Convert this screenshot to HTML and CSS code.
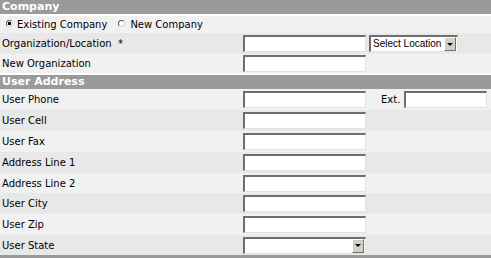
FILE: index.html
```html
<!DOCTYPE html>
<html>
<head>
<meta charset="utf-8">
<title>User Address</title>
<link rel="stylesheet" href="styles.css">
</head>
<body>
<div class="form">
  <div class="head">Company</div>
  <div class="sep"></div>
  <div class="row light h17 radios">
    <span class="radio on"></span><span class="rlabel">Existing Company</span>
    <span class="radio second"></span><span class="rlabel">New Company</span>
  </div>
  <div class="row dark h21">
    <span class="label">Organization/Location&nbsp; *</span>
    <input type="text" class="field">
    <div class="extra">
      <span class="select loc"><span class="val">Select Location</span><span class="btn"><span class="tri"></span></span></span>
    </div>
  </div>
  <div class="row light h19">
    <span class="label">New Organization</span>
    <input type="text" class="field">
  </div>
  <div class="sep"></div>
  <div class="head">User Address</div>
  <div class="row light h21">
    <span class="label">User Phone</span>
    <input type="text" class="field">
    <div class="extra ext">
      <span class="extlabel">Ext.</span>
      <input type="text" class="field small">
    </div>
  </div>
  <div class="row dark h21">
    <span class="label">User Cell</span>
    <input type="text" class="field">
  </div>
  <div class="row light h21">
    <span class="label">User Fax</span>
    <input type="text" class="field">
  </div>
  <div class="row dark h21">
    <span class="label">Address Line 1</span>
    <input type="text" class="field">
  </div>
  <div class="row light h20">
    <span class="label">Address Line 2</span>
    <input type="text" class="field">
  </div>
  <div class="row dark h21">
    <span class="label">User City</span>
    <input type="text" class="field">
  </div>
  <div class="row light h21">
    <span class="label">User Zip</span>
    <input type="text" class="field">
  </div>
  <div class="row dark h20">
    <span class="label">User State</span>
    <span class="select state"><span class="val"></span><span class="btn"><span class="tri"></span></span></span>
  </div>
  <div class="foot"></div>
</div>
</body>
</html>
```

FILE: styles.css
```css
html, body {
  margin: 0;
  padding: 0;
  background: #ffffff;
}

.form {
  width: 491px;
  font-family: "DejaVu Sans", Verdana, sans-serif;
  font-size: 10px;
  color: #000;
}

.head {
  height: 14px;
  line-height: 14px;
  background: #9a9a9a;
  color: #ffffff;
  font-weight: bold;
  font-size: 11px;
  padding-left: 2px;
}

.sep {
  height: 2px;
  background: #ffffff;
}

.foot {
  height: 3px;
  background: #9a9a9a;
}

.row {
  display: grid;
  grid-template-columns: 243px 123px 1fr;
  align-items: center;
}

.light { background: #f1f1f1; }
.dark { background: #e8e8e8; }

.h17 { height: 17px; }
.h19 { height: 19px; }
.h20 { height: 20px; }
.h21 { height: 21px; }

.label {
  padding-left: 2px;
  white-space: nowrap;
}

.field {
  box-sizing: border-box;
  width: 123px;
  height: 17px;
  margin: 0;
  padding: 0 2px;
  border-style: solid;
  border-width: 2px 1px 1px 2px;
  border-color: #6e6e6e #e2e2e2 #e2e2e2 #6e6e6e;
  background: #ffffff;
  font: inherit;
  outline: none;
}

.field.small {
  width: 83px;
}

.extra {
  display: flex;
  align-items: center;
}

.ext .extlabel {
  margin-left: 15px;
  width: 23px;
}

.radios {
  display: flex;
  align-items: center;
  padding-left: 6px;
}

.radio {
  box-sizing: border-box;
  width: 7px;
  height: 7px;
  border-radius: 50%;
  border: 1px solid;
  border-color: #5a5a5a #d0d0d0 #d0d0d0 #5a5a5a;
  background: #ffffff;
  margin-bottom: 2px;
  margin-right: 4px;
}

.radio.on {
  background: radial-gradient(circle, #000 0 1.4px, #fff 1.6px);
}

.radio.second {
  margin-left: 11px;
  margin-right: 5px;
}

.select {
  box-sizing: border-box;
  display: flex;
  align-items: stretch;
  height: 17px;
  border-style: solid;
  border-width: 2px 1px 1px 2px;
  border-color: #6e6e6e #e2e2e2 #e2e2e2 #6e6e6e;
  background: #ffffff;
}

.select .val {
  flex: 1;
  font-family: "Liberation Sans", Arial, sans-serif;
  font-size: 10px;
  line-height: 14px;
  padding-left: 2px;
  white-space: nowrap;
  overflow: hidden;
}

.select.loc {
  width: 89px;
  margin-left: 3px;
}

.select.state {
  width: 123px;
}

.btn {
  box-sizing: border-box;
  width: 12px;
  margin: 0 1px 0 0;
  background: #d4d0c8;
  border-style: solid;
  border-width: 1px;
  border-color: #ffffff #6e6e6e #6e6e6e #ffffff;
  display: flex;
  align-items: center;
  justify-content: center;
}

.tri {
  width: 0;
  height: 0;
  border-left: 3px solid transparent;
  border-right: 3px solid transparent;
  border-top: 3px solid #000;
}
```
